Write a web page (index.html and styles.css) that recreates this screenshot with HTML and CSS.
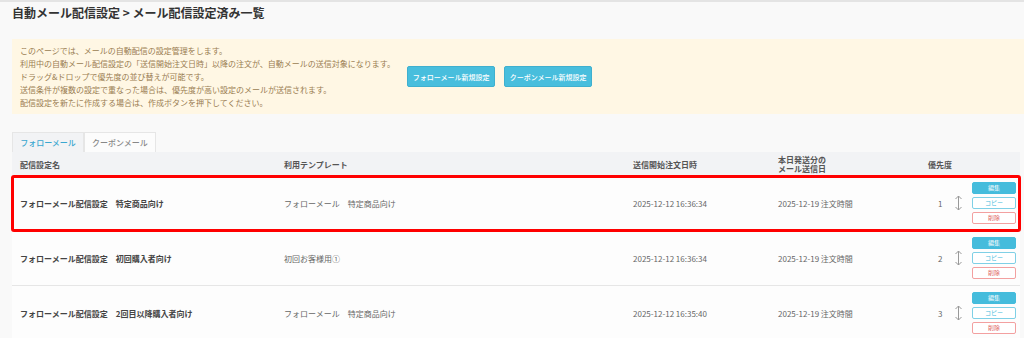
FILE: index.html
```html
<!DOCTYPE html>
<html lang="ja">

<head>
    <meta charset="UTF-8">
    <meta name="viewport" content="width=device-width, initial-scale=1.0">
    <title>メール配信設定済み一覧</title>
    <link rel="stylesheet" href="styles.css">
</head>

<body>
    <div class="topbar"></div>

    <div class="page">
        <h1 class="page-title">自動メール配信設定 &gt; メール配信設定済み一覧</h1>

        <div class="notice">
            <div class="notice-text">
                <p>このページでは、メールの自動配信の設定管理をします。</p>
                <p>利用中の自動メール配信設定の「送信開始注文日時」以降の注文が、自動メールの送信対象になります。</p>
                <p>ドラッグ&amp;ドロップで優先度の並び替えが可能です。</p>
                <p>送信条件が複数の設定で重なった場合は、優先度が高い設定のメールが送信されます。</p>
                <p>配信設定を新たに作成する場合は、作成ボタンを押下してください。</p>
            </div>
            <div class="notice-actions">
                <button class="btn-new">フォローメール新規設定</button>
                <button class="btn-new">クーポンメール新規設定</button>
            </div>
        </div>

        <div class="tabs">
            <div class="tab active">フォローメール</div>
            <div class="tab">クーポンメール</div>
        </div>

        <div class="list">
            <div class="list-head">
                <div>配信設定名</div>
                <div>利用テンプレート</div>
                <div>送信開始注文日時</div>
                <div class="two-line">本日発送分の<br>メール送信日</div>
                <div class="head-priority">優先度</div>
            </div>

            <div class="list-row highlight">
                <div class="name">フォローメール配信設定　特定商品向け</div>
                <div>フォローメール　特定商品向け</div>
                <div>2025-12-12 16:36:34</div>
                <div>2025-12-19 注文時間</div>
                <div class="priority">
                    <span class="num">1</span>
                    <svg class="drag" width="9" height="16" viewBox="0 0 9 16"><path d="M4.5 1v14M1.5 4l3-3 3 3M1.5 12l3 3 3-3" fill="none" stroke="#999" stroke-width="1"/></svg>
                    <div class="actions">
                        <button class="btn-edit">編集</button>
                        <button class="btn-copy">コピー</button>
                        <button class="btn-delete">削除</button>
                    </div>
                </div>
            </div>

            <div class="list-row">
                <div class="name">フォローメール配信設定　初回購入者向け</div>
                <div>初回お客様用①</div>
                <div>2025-12-12 16:36:34</div>
                <div>2025-12-19 注文時間</div>
                <div class="priority">
                    <span class="num">2</span>
                    <svg class="drag" width="9" height="16" viewBox="0 0 9 16"><path d="M4.5 1v14M1.5 4l3-3 3 3M1.5 12l3 3 3-3" fill="none" stroke="#999" stroke-width="1"/></svg>
                    <div class="actions">
                        <button class="btn-edit">編集</button>
                        <button class="btn-copy">コピー</button>
                        <button class="btn-delete">削除</button>
                    </div>
                </div>
            </div>

            <div class="list-row">
                <div class="name">フォローメール配信設定　2回目以降購入者向け</div>
                <div>フォローメール　特定商品向け</div>
                <div>2025-12-12 16:35:40</div>
                <div>2025-12-19 注文時間</div>
                <div class="priority">
                    <span class="num">3</span>
                    <svg class="drag" width="9" height="16" viewBox="0 0 9 16"><path d="M4.5 1v14M1.5 4l3-3 3 3M1.5 12l3 3 3-3" fill="none" stroke="#999" stroke-width="1"/></svg>
                    <div class="actions">
                        <button class="btn-edit">編集</button>
                        <button class="btn-copy">コピー</button>
                        <button class="btn-delete">削除</button>
                    </div>
                </div>
            </div>
        </div>
    </div>
</body>

</html>
```

FILE: styles.css
```css
body {
    margin: 0;
    font-family: "Noto Sans CJK JP", "Noto Sans", sans-serif;
    background-color: #f9f9f9;
    color: #555;
    overflow: hidden;
}

.topbar {
    height: 2px;
    background-color: #e4e4e4;
}

.page {
    padding-left: 12px;
}

.page-title {
    margin: 0;
    padding-top: 4px;
    height: 33px;
    font-size: 12px;
    font-weight: bold;
    color: #333;
    line-height: 14px;
}

.notice {
    display: flex;
    align-items: center;
    height: 75px;
    padding-left: 8px;
    background-color: #fff7e4;
    color: #9a7d52;
    font-size: 8px;
    box-sizing: border-box;
}

.notice-text p {
    margin: 0;
    line-height: 13px;
}

.notice-actions {
    display: flex;
    gap: 9px;
    margin-left: 12px;
}

.btn-new {
    width: 88px;
    height: 21px;
    padding: 0;
    border: 1px solid #3fb0cf;
    border-radius: 2px;
    background-color: #48bedd;
    color: white;
    font-family: inherit;
    font-size: 7px;
    font-weight: 500;
}

.tabs {
    display: flex;
    margin-top: 18px;
    height: 20px;
}

.tab {
    width: 72px;
    box-sizing: border-box;
    border: 1px solid #e6e6e6;
    border-bottom: none;
    text-align: center;
    line-height: 20px;
    font-size: 8px;
    font-weight: 500;
    color: #888;
    background-color: #fcfcfc;
}

.tab.active {
    color: #3aa7d0;
    background-color: #f2f3f5;
}

.list {
    margin-right: 4px;
}

.list-head,
.list-row {
    display: grid;
    grid-template-columns: 264px 349px 145px 148px 1fr;
    align-items: center;
    padding-left: 8px;
    font-size: 8px;
}

.list-head {
    height: 24px;
    background-color: #f2f3f5;
    font-weight: bold;
    color: #555;
}

.two-line {
    line-height: 9px;
}

.head-priority {
    padding-left: 2px;
}

.list-row {
    height: 55px;
    background-color: #fdfdfd;
    border-bottom: 1px solid #e6e6e6;
    box-sizing: border-box;
    color: #666;
}

.list-row.highlight {
    outline: 3px solid #ff0000;
    outline-offset: -2px;
    border-radius: 2px;
    position: relative;
}

.name {
    font-weight: bold;
    color: #444;
}

.priority {
    display: flex;
    align-items: center;
}

.num {
    margin-left: 12px;
    width: 4px;
}

.drag {
    margin-left: 12px;
}

.actions {
    display: flex;
    flex-direction: column;
    gap: 3px;
    margin-left: 9px;
}

.actions button {
    width: 44px;
    height: 12px;
    padding: 0;
    border-radius: 2px;
    font-family: inherit;
    font-size: 6px;
    line-height: 10px;
    background-color: white;
}

.btn-edit {
    border: 1px solid #45bcdc;
    background-color: #45bcdc !important;
    color: white;
}

.btn-copy {
    border: 1px solid #7fd0e6;
    color: #45bcdc;
}

.btn-delete {
    border: 1px solid #f3a0a0;
    color: #e06a6a;
}
```
